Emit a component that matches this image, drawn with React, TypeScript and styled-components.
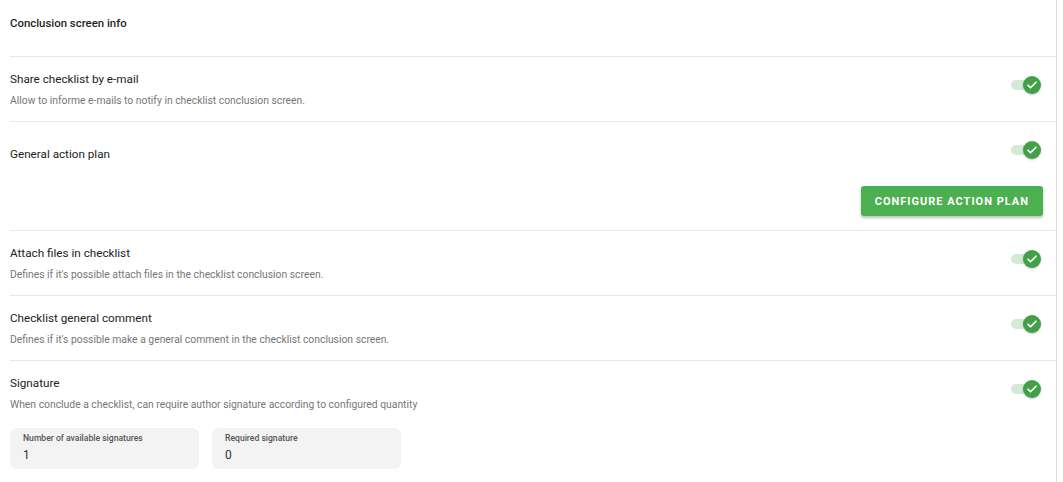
import React from 'react';
import styled, { createGlobalStyle } from 'styled-components';

const GlobalStyle = createGlobalStyle`
  body {
    margin: 0;
    background: #fff;
    font-family: Roboto, "Liberation Sans", Arial, sans-serif;
  }
`;

const Page = styled.div`
  margin-left: 10px;
  width: 1046px;
  min-height: 482px;
  border-right: 1px solid #dcdcdc;
  box-sizing: content-box;
`;

const Header = styled.div`
  height: 57px;
  display: flex;
  align-items: flex-start;
  padding-top: 16px;
  box-sizing: border-box;
  font-size: 11.4px;
  font-weight: 500;
  color: #1f1f1f;
  border-bottom: 1px solid #e8e8e8;
`;

const Section = styled.div<{ $last?: boolean }>`
  padding: 13px 15px 13px 0;
  border-bottom: ${(p) => (p.$last ? 'none' : '1px solid #e8e8e8')};
`;

const Row = styled.div`
  display: flex;
  align-items: center;
  justify-content: space-between;
  min-height: 38px;
`;

const Texts = styled.div`
  display: flex;
  flex-direction: column;
  gap: 7px;
`;

const Title = styled.div`
  font-size: 11.7px;
  line-height: 16px;
  color: #222;
`;

const Desc = styled.div`
  font-size: 10.35px;
  line-height: 14px;
  color: #777;
`;

const SwitchBox = styled.div`
  position: relative;
  width: 32px;
  height: 38px;
  flex-shrink: 0;
`;

const Track = styled.div`
  position: absolute;
  left: 2px;
  top: 10px;
  width: 24px;
  height: 10px;
  border-radius: 5px;
  background: #d3ebd4;
`;

const Thumb = styled.div`
  position: absolute;
  left: 14px;
  top: 6px;
  width: 18px;
  height: 18px;
  border-radius: 50%;
  background: #43a047;
  display: flex;
  align-items: center;
  justify-content: center;
  box-shadow: 0 1px 2px rgba(0, 0, 0, 0.2);
`;

const Actions = styled.div`
  display: flex;
  justify-content: flex-end;
  margin: 13px -2px 1px 0;
`;

const ActionButton = styled.button`
  height: 30px;
  padding: 0 14px;
  border: none;
  border-radius: 3px;
  background: #4caf50;
  color: #fff;
  font-family: Roboto, "Liberation Sans", Arial, sans-serif;
  font-size: 11px;
  font-weight: 700;
  letter-spacing: 1px;
  box-shadow: 0 2px 3px rgba(0, 0, 0, 0.25);
  cursor: pointer;
`;

const Fields = styled.div`
  display: flex;
  gap: 13px;
  margin-top: 16px;
`;

const Field = styled.div`
  width: 189px;
  height: 41px;
  box-sizing: border-box;
  padding: 5px 13px;
  background: #f3f3f3;
  border-radius: 7px;
`;

const FieldLabel = styled.div`
  font-size: 8.6px;
  font-weight: 500;
  line-height: 11px;
  color: #555;
`;

const FieldValue = styled.div`
  font-size: 12px;
  line-height: 16px;
  margin-top: 3px;
  color: #333;
`;

const Toggle = () => (
  <SwitchBox>
    <Track />
    <Thumb>
      <svg width="12" height="12" viewBox="0 0 24 24">
        <path d="M4 12.5l5 5L20 6.5" fill="none" stroke="#fff" strokeWidth="3.4" strokeLinecap="round" strokeLinejoin="round" />
      </svg>
    </Thumb>
  </SwitchBox>
);

const settings = [
  { title: 'Share checklist by e-mail', desc: 'Allow to informe e-mails to notify in checklist conclusion screen.' },
  { title: 'General action plan', action: 'CONFIGURE ACTION PLAN' },
  { title: 'Attach files in checklist', desc: "Defines if it's possible attach files in the checklist conclusion screen." },
  { title: 'Checklist general comment', desc: "Defines if it's possible make a general comment in the checklist conclusion screen." },
  {
    title: 'Signature',
    desc: 'When conclude a checklist, can require author signature according to configured quantity',
    fields: [
      { label: 'Number of available signatures', value: '1' },
      { label: 'Required signature', value: '0' },
    ],
  },
];

export default function App() {
  return (
    <>
      <GlobalStyle />
      <Page>
        <Header>Conclusion screen info</Header>
        {settings.map((s, i) => (
          <Section key={s.title} $last={i === settings.length - 1}>
            <Row>
              <Texts>
                <Title>{s.title}</Title>
                {s.desc && <Desc>{s.desc}</Desc>}
              </Texts>
              <Toggle />
            </Row>
            {s.action && (
              <Actions>
                <ActionButton>{s.action}</ActionButton>
              </Actions>
            )}
            {s.fields && (
              <Fields>
                {s.fields.map((f) => (
                  <Field key={f.label}>
                    <FieldLabel>{f.label}</FieldLabel>
                    <FieldValue>{f.value}</FieldValue>
                  </Field>
                ))}
              </Fields>
            )}
          </Section>
        ))}
      </Page>
    </>
  );
}
